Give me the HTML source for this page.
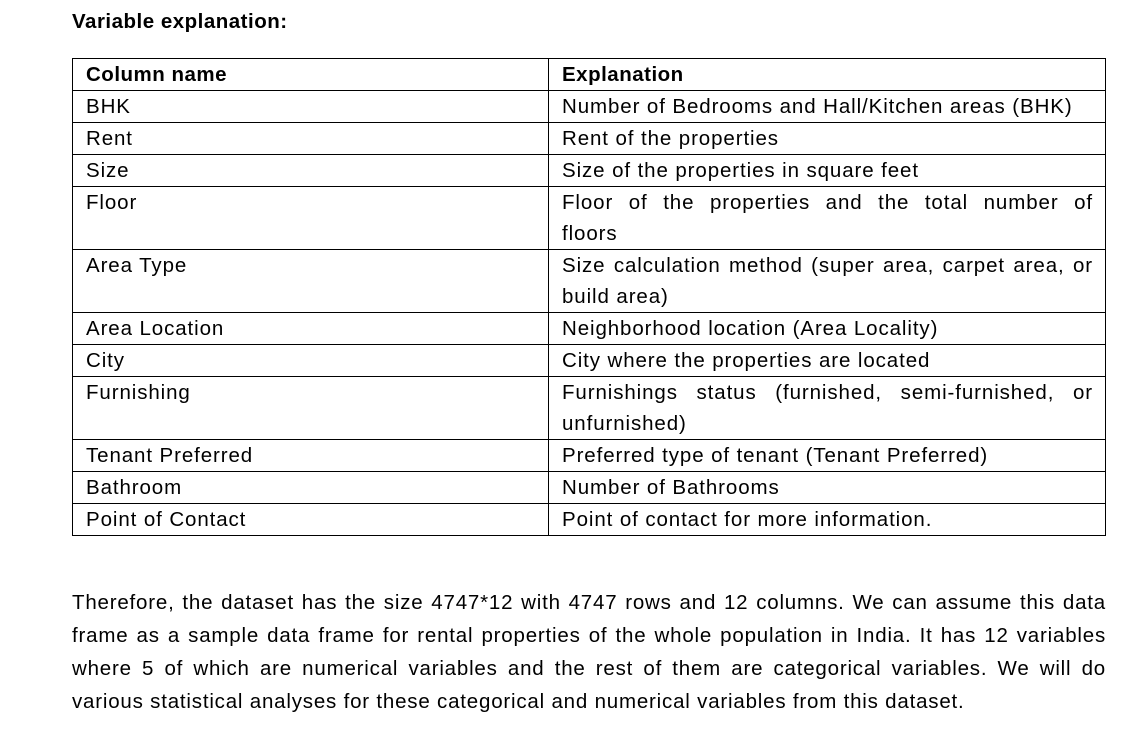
<!DOCTYPE html>
<html><head><meta charset="utf-8"><style>
html,body{margin:0;padding:0;background:#fff;width:1144px;height:751px;overflow:hidden}
body{font-family:"Liberation Sans",Arial,sans-serif;color:#000;font-size:20.5px;letter-spacing:0.9px}
.title{position:absolute;left:72px;top:10px;font-weight:bold;letter-spacing:0.5px}
table{position:absolute;left:72px;top:58px;width:1034px;border-collapse:collapse;table-layout:fixed}
td{border:1px solid #000;vertical-align:top;padding:0 12px 0 13px;line-height:31px;height:31px;white-space:normal;overflow:hidden}
td.n{width:450px}
td.e{text-align:justify}
tr.h td{font-weight:bold;letter-spacing:0.5px}
tr.d td{height:62px}
.j{display:block;text-align:justify;text-align-last:justify}
p{position:absolute;left:72px;top:586px;width:1034px;margin:0;text-align:justify;line-height:33px;letter-spacing:0.8px}
</style></head><body>
<div class="title">Variable explanation:</div>
<table>
<tr class="h"><td class="n">Column name</td><td class="e">Explanation</td></tr>
<tr><td>BHK</td><td class="e">Number of Bedrooms and Hall/Kitchen areas (BHK)</td></tr>
<tr><td>Rent</td><td class="e">Rent of the properties</td></tr>
<tr><td>Size</td><td class="e">Size of the properties in square feet</td></tr>
<tr class="d"><td>Floor</td><td class="e"><span class="j">Floor of the properties and the total number of</span>floors</td></tr>
<tr class="d"><td>Area Type</td><td class="e">Size calculation method (super area, carpet area, or build area)</td></tr>
<tr><td>Area Location</td><td class="e">Neighborhood location (Area Locality)</td></tr>
<tr><td>City</td><td class="e">City where the properties are located</td></tr>
<tr class="d"><td>Furnishing</td><td class="e">Furnishings status (furnished, semi-furnished, or unfurnished)</td></tr>
<tr><td>Tenant Preferred</td><td class="e">Preferred type of tenant (Tenant Preferred)</td></tr>
<tr><td>Bathroom</td><td class="e">Number of Bathrooms</td></tr>
<tr><td>Point of Contact</td><td class="e">Point of contact for more information.</td></tr>
</table>
<p>Therefore, the dataset has the size 4747*12 with 4747 rows and 12 columns. We can assume this data frame as a sample data frame for rental properties of the whole population in India. It has 12 variables where 5 of which are numerical variables and the rest of them are categorical variables. We will do various statistical analyses for these categorical and numerical variables from this dataset.</p>
</body></html>
